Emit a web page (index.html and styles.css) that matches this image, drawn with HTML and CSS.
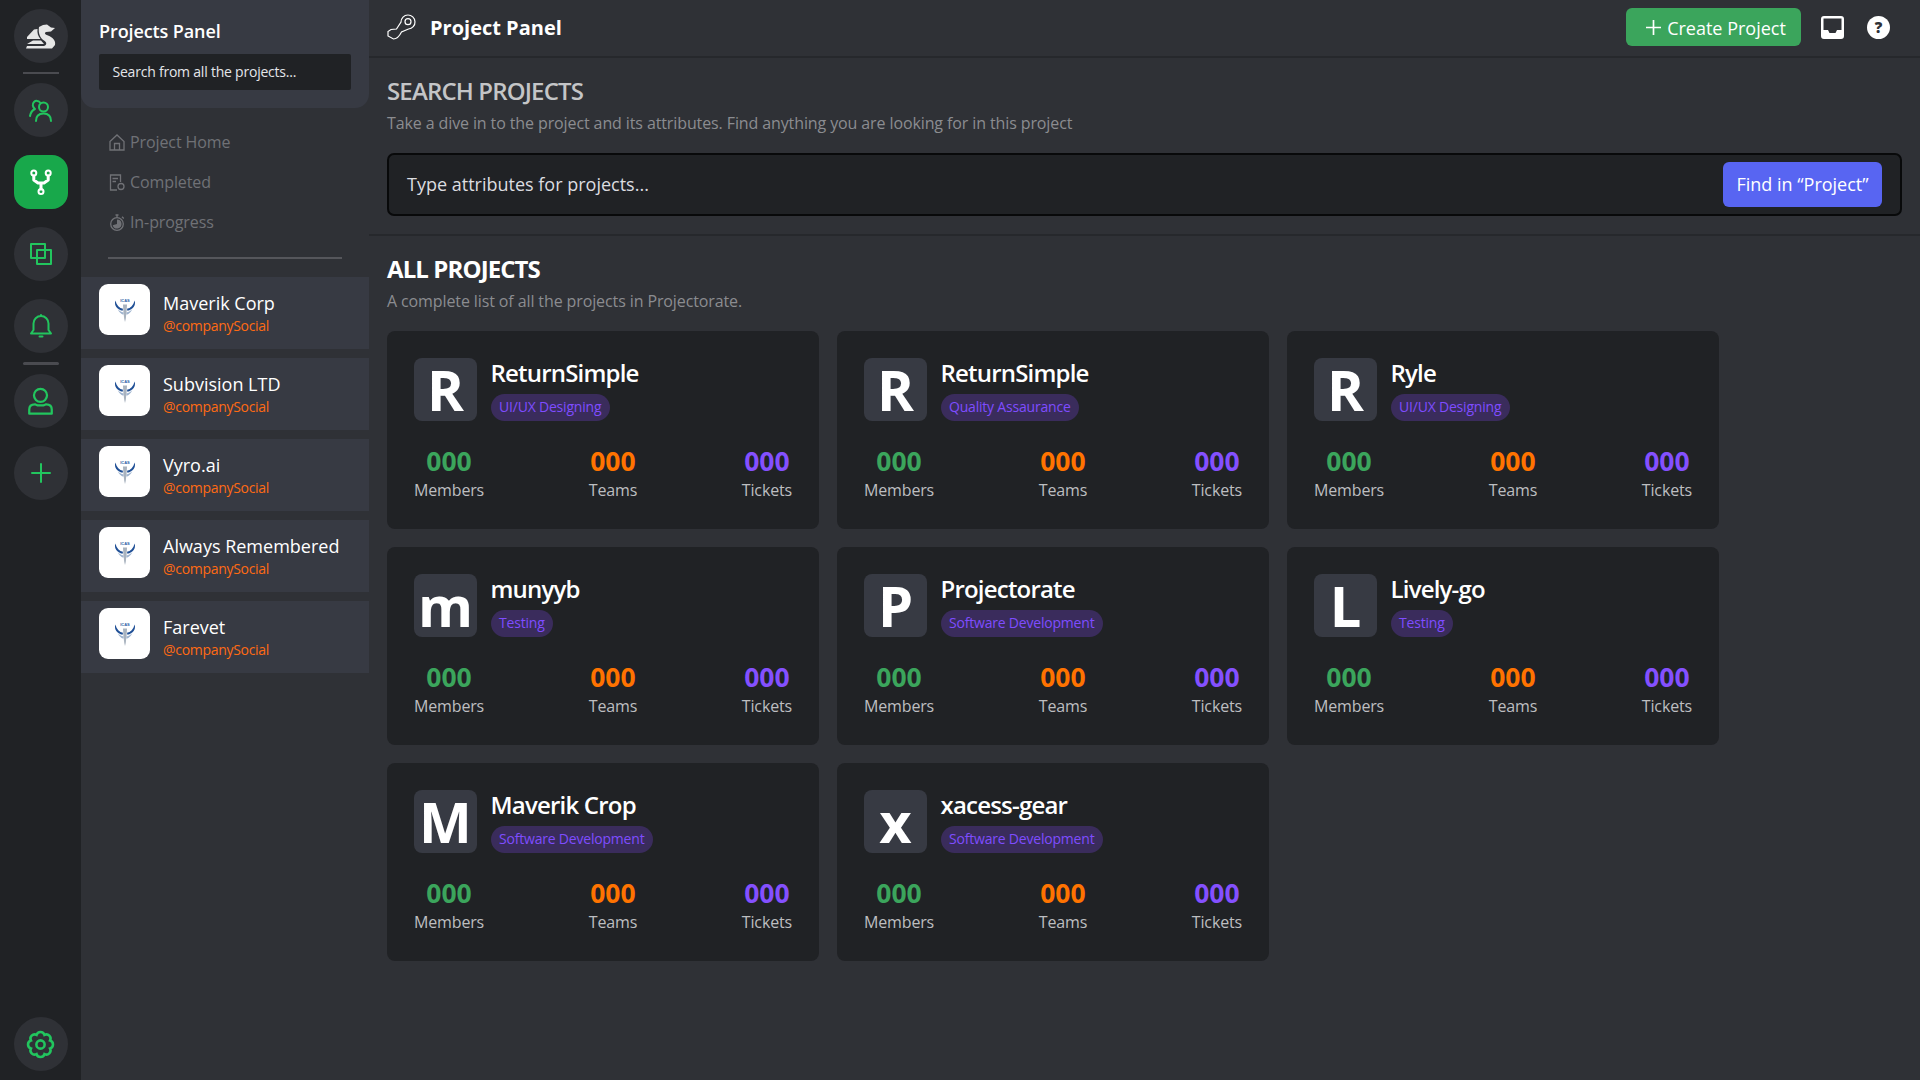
FILE: index.html
```html
<!DOCTYPE html>
<html lang="en">
<head>
<meta charset="utf-8">
<title>Project Panel</title>
<link rel="stylesheet" href="styles.css">
</head>
<body>
<div class="app">
  <nav class="rail">
    <a class="rail-btn">
      <svg class="logo" viewBox="0 0 30 25"><path fill="#e6e6e6" d="M13 3L17 1L21 .5L25 3.500L29 4L25 7.500L20 8C18 9 19 10.500 22 11.500C27 13.500 30 17 29 21L26 24.500L0 24.500L1 22L18 22C21 21 21 18.500 18 16.500C14 14 12 9 13 3Z"/><path fill="#e6e6e6" d="M1 13L8 5.500L11.500 5C11 9 12 12 14.500 15L1 15ZM1 20L7 16.500L15 16.500L18 20Z"/></svg>
    </a>
    <span class="rail-sep"></span>
    <a class="rail-btn">
      <svg class="ico" viewBox="0 0 24 24"><circle cx="14.500" cy="9" r="4.500"/><path d="M7 23C7 18 10 15.500 14.500 15.500S22 18 22 23"/><path d="M11 4.500A4 4 0 0 0 5 4C3 6 3.500 9 6 11C3 12.500 1.500 15 1 18"/></svg>
    </a>
    <a class="rail-btn active">
      <svg class="ico" viewBox="0 0 24 24"><circle cx="4.800" cy="3" r="2.500"/><circle cx="19.200" cy="3" r="2.500"/><circle cx="12" cy="21.500" r="2.500"/><path d="M4.800 6V10L9 13H15L19.200 10V6M12 13V19" stroke-width="3"/></svg>
    </a>
    <a class="rail-btn">
      <svg class="ico" viewBox="0 0 24 24"><rect x="2" y="2" width="14" height="14"/><rect x="8" y="8" width="14" height="14"/></svg>
    </a>
    <a class="rail-btn">
      <svg class="ico" viewBox="0 0 24 24"><path d="M2 19.500H22L19.500 16V9.500A7.500 7.500 0 0 0 4.500 9.500V16ZM12 2V1"/><path d="M10.500 22.500H13.500"/></svg>
    </a>
    <span class="rail-sep thick"></span>
    <a class="rail-btn">
      <svg class="ico big" viewBox="0 0 24 24"><circle cx="12" cy="6.500" r="5.800"/><path d="M2 22.800V19C2 16 4 14.500 7 14.500L9.500 15.500H14.500L17 14.500C20 14.500 22 16 22 19V22.800Z"/></svg>
    </a>
    <a class="rail-btn">
      <svg class="ico" viewBox="0 0 24 24"><path d="M12 3V21M3 12H21"/></svg>
    </a>
    <a class="rail-btn settings">
      <svg class="gear" viewBox="0 0 24 24"><path d="M19.390 8.940A3.200 3.200 0 0 1 19.390 15.060A3.200 3.200 0 0 1 15.060 19.390A3.200 3.200 0 0 1 8.940 19.390A3.200 3.200 0 0 1 4.610 15.060A3.200 3.200 0 0 1 4.610 8.940A3.200 3.200 0 0 1 8.940 4.610A3.200 3.200 0 0 1 15.060 4.610A3.200 3.200 0 0 1 19.390 8.940Z"/><circle cx="12" cy="12" r="3.200"/></svg>
    </a>
  </nav>

  <aside class="sidebar">
    <div class="side-head">
      <h2 class="side-title">Projects Panel</h2>
      <div class="side-search">Search from all the projects...</div>
    </div>
    <ul class="side-menu">
      <li class="side-link"><svg class="menu-ico" viewBox="0 0 16 17"><path d="M1 7.500L8 1L15 7.500V16H1ZM5.500 16V9.500H10.500V16"/></svg>Project Home</li>
      <li class="side-link"><svg class="menu-ico" viewBox="0 0 16 17"><path d="M8 16H1.500V1H11.500V8M3.500 4.500H9M3.500 7.500H7"/><circle cx="12" cy="12.500" r="3"/></svg>Completed</li>
      <li class="side-link"><svg class="menu-ico" viewBox="0 0 16 17"><circle cx="8" cy="10" r="6.300"/><path d="M8 1V3.500M6.500 1H9.500M13 2.800L14.800 4.500"/><path class="menu-fill" d="M8 10V5.500A4.500 4.500 0 1 1 3.700 11.200Z"/></svg>In-progress</li>
    </ul>
    <hr class="side-rule">
    <ul class="company-list">
      <li class="company"><span class="company-logo"><svg class="crest" viewBox="0 0 30 32"><text x="15" y="6" class="crest-text">ICAS</text><path d="M3 4C1 10 5 15 12 17L12.500 14.500C8 13.500 4.500 10 3 4Z" fill="#1f4f96"/><path d="M27 4C29 10 25 15 18 17L17.500 14.500C22 13.500 25.500 10 27 4Z" fill="#1f4f96"/><path d="M6 15C9 18 12 19 13.500 19L13 22C10 21 7.500 18.500 6 15Z" fill="#9fb4cf"/><path d="M24 15C21 18 18 19 16.500 19L17 22C20 21 22.500 18.500 24 15Z" fill="#9fb4cf"/><path d="M12.500 9H17.500L17 18L16 27L15 31L14 27L13 18Z" fill="#a9b3bf"/></svg></span><span class="company-text"><b class="company-name">Maverik Corp</b><i class="company-social">@companySocial</i></span></li>
      <li class="company"><span class="company-logo"><svg class="crest" viewBox="0 0 30 32"><text x="15" y="6" class="crest-text">ICAS</text><path d="M3 4C1 10 5 15 12 17L12.500 14.500C8 13.500 4.500 10 3 4Z" fill="#1f4f96"/><path d="M27 4C29 10 25 15 18 17L17.500 14.500C22 13.500 25.500 10 27 4Z" fill="#1f4f96"/><path d="M6 15C9 18 12 19 13.500 19L13 22C10 21 7.500 18.500 6 15Z" fill="#9fb4cf"/><path d="M24 15C21 18 18 19 16.500 19L17 22C20 21 22.500 18.500 24 15Z" fill="#9fb4cf"/><path d="M12.500 9H17.500L17 18L16 27L15 31L14 27L13 18Z" fill="#a9b3bf"/></svg></span><span class="company-text"><b class="company-name">Subvision LTD</b><i class="company-social">@companySocial</i></span></li>
      <li class="company"><span class="company-logo"><svg class="crest" viewBox="0 0 30 32"><text x="15" y="6" class="crest-text">ICAS</text><path d="M3 4C1 10 5 15 12 17L12.500 14.500C8 13.500 4.500 10 3 4Z" fill="#1f4f96"/><path d="M27 4C29 10 25 15 18 17L17.500 14.500C22 13.500 25.500 10 27 4Z" fill="#1f4f96"/><path d="M6 15C9 18 12 19 13.500 19L13 22C10 21 7.500 18.500 6 15Z" fill="#9fb4cf"/><path d="M24 15C21 18 18 19 16.500 19L17 22C20 21 22.500 18.500 24 15Z" fill="#9fb4cf"/><path d="M12.500 9H17.500L17 18L16 27L15 31L14 27L13 18Z" fill="#a9b3bf"/></svg></span><span class="company-text"><b class="company-name">Vyro.ai</b><i class="company-social">@companySocial</i></span></li>
      <li class="company"><span class="company-logo"><svg class="crest" viewBox="0 0 30 32"><text x="15" y="6" class="crest-text">ICAS</text><path d="M3 4C1 10 5 15 12 17L12.500 14.500C8 13.500 4.500 10 3 4Z" fill="#1f4f96"/><path d="M27 4C29 10 25 15 18 17L17.500 14.500C22 13.500 25.500 10 27 4Z" fill="#1f4f96"/><path d="M6 15C9 18 12 19 13.500 19L13 22C10 21 7.500 18.500 6 15Z" fill="#9fb4cf"/><path d="M24 15C21 18 18 19 16.500 19L17 22C20 21 22.500 18.500 24 15Z" fill="#9fb4cf"/><path d="M12.500 9H17.500L17 18L16 27L15 31L14 27L13 18Z" fill="#a9b3bf"/></svg></span><span class="company-text"><b class="company-name">Always Remembered</b><i class="company-social">@companySocial</i></span></li>
      <li class="company"><span class="company-logo"><svg class="crest" viewBox="0 0 30 32"><text x="15" y="6" class="crest-text">ICAS</text><path d="M3 4C1 10 5 15 12 17L12.500 14.500C8 13.500 4.500 10 3 4Z" fill="#1f4f96"/><path d="M27 4C29 10 25 15 18 17L17.500 14.500C22 13.500 25.500 10 27 4Z" fill="#1f4f96"/><path d="M6 15C9 18 12 19 13.500 19L13 22C10 21 7.500 18.500 6 15Z" fill="#9fb4cf"/><path d="M24 15C21 18 18 19 16.500 19L17 22C20 21 22.500 18.500 24 15Z" fill="#9fb4cf"/><path d="M12.500 9H17.500L17 18L16 27L15 31L14 27L13 18Z" fill="#a9b3bf"/></svg></span><span class="company-text"><b class="company-name">Farevet</b><i class="company-social">@companySocial</i></span></li>
    </ul>
  </aside>

  <main class="main">
    <header class="topbar">
      <svg class="top-ico" viewBox="0 0 29 26"><path d="M14 8A7 7 0 1 1 21.500 15L14.500 18C12.500 22 9.500 25 6.500 25L1 22V17.500L4 15.500L9.500 15Z"/><circle cx="21" cy="7.700" r="3"/></svg>
      <h1 class="top-title">Project Panel</h1>
      <button class="btn-create"><svg class="plus" viewBox="0 0 16 16"><path d="M8 0V16M0 8H16"/></svg><span class="btn-label">Create Project</span></button>
      <svg class="inbox" viewBox="0 0 23 23"><path fill="#fff" fill-rule="evenodd" d="M3 0H20A3 3 0 0 1 23 3V20A3 3 0 0 1 20 23H3A3 3 0 0 1 0 20V3A3 3 0 0 1 3 0ZM2.500 2.500V14H7L8.500 17H14.500L16 14H20.500V2.500Z"/></svg>
      <span class="help">?</span>
    </header>

    <section class="search-section">
      <h2 class="sec-title muted">SEARCH PROJECTS</h2>
      <p class="sec-sub">Take a dive in to the project and its attributes. Find anything you are looking for in this project</p>
      <div class="find-box">
        <span class="find-text">Type attributes for projects...</span>
        <button class="btn-find">Find in “Project”</button>
      </div>
    </section>

    <section class="all-section">
      <h2 class="sec-title">ALL PROJECTS</h2>
      <p class="sec-sub">A complete list of all the projects in Projectorate.</p>
      <div class="grid">
        <article class="card">
          <div class="card-head"><span class="letter">R</span><div><h3 class="card-name">ReturnSimple</h3><span class="tag">UI/UX Designing</span></div></div>
          <div class="stats"><div class="stat"><b class="num green">000</b><span class="lbl">Members</span></div><div class="stat"><b class="num orange">000</b><span class="lbl">Teams</span></div><div class="stat"><b class="num purple">000</b><span class="lbl">Tickets</span></div></div>
        </article>
        <article class="card">
          <div class="card-head"><span class="letter">R</span><div><h3 class="card-name">ReturnSimple</h3><span class="tag">Quality Assaurance</span></div></div>
          <div class="stats"><div class="stat"><b class="num green">000</b><span class="lbl">Members</span></div><div class="stat"><b class="num orange">000</b><span class="lbl">Teams</span></div><div class="stat"><b class="num purple">000</b><span class="lbl">Tickets</span></div></div>
        </article>
        <article class="card">
          <div class="card-head"><span class="letter">R</span><div><h3 class="card-name">Ryle</h3><span class="tag">UI/UX Designing</span></div></div>
          <div class="stats"><div class="stat"><b class="num green">000</b><span class="lbl">Members</span></div><div class="stat"><b class="num orange">000</b><span class="lbl">Teams</span></div><div class="stat"><b class="num purple">000</b><span class="lbl">Tickets</span></div></div>
        </article>
        <article class="card">
          <div class="card-head"><span class="letter">m</span><div><h3 class="card-name">munyyb</h3><span class="tag">Testing</span></div></div>
          <div class="stats"><div class="stat"><b class="num green">000</b><span class="lbl">Members</span></div><div class="stat"><b class="num orange">000</b><span class="lbl">Teams</span></div><div class="stat"><b class="num purple">000</b><span class="lbl">Tickets</span></div></div>
        </article>
        <article class="card">
          <div class="card-head"><span class="letter">P</span><div><h3 class="card-name">Projectorate</h3><span class="tag">Software Development</span></div></div>
          <div class="stats"><div class="stat"><b class="num green">000</b><span class="lbl">Members</span></div><div class="stat"><b class="num orange">000</b><span class="lbl">Teams</span></div><div class="stat"><b class="num purple">000</b><span class="lbl">Tickets</span></div></div>
        </article>
        <article class="card">
          <div class="card-head"><span class="letter">L</span><div><h3 class="card-name">Lively-go</h3><span class="tag">Testing</span></div></div>
          <div class="stats"><div class="stat"><b class="num green">000</b><span class="lbl">Members</span></div><div class="stat"><b class="num orange">000</b><span class="lbl">Teams</span></div><div class="stat"><b class="num purple">000</b><span class="lbl">Tickets</span></div></div>
        </article>
        <article class="card">
          <div class="card-head"><span class="letter">M</span><div><h3 class="card-name">Maverik Crop</h3><span class="tag">Software Development</span></div></div>
          <div class="stats"><div class="stat"><b class="num green">000</b><span class="lbl">Members</span></div><div class="stat"><b class="num orange">000</b><span class="lbl">Teams</span></div><div class="stat"><b class="num purple">000</b><span class="lbl">Tickets</span></div></div>
        </article>
        <article class="card">
          <div class="card-head"><span class="letter">x</span><div><h3 class="card-name">xacess-gear</h3><span class="tag">Software Development</span></div></div>
          <div class="stats"><div class="stat"><b class="num green">000</b><span class="lbl">Members</span></div><div class="stat"><b class="num orange">000</b><span class="lbl">Teams</span></div><div class="stat"><b class="num purple">000</b><span class="lbl">Tickets</span></div></div>
        </article>
      </div>
    </section>
  </main>
</div>
</body>
</html>
```
FILE: styles.css
```css
* { box-sizing: border-box; }
html, body { margin: 0; height: 100%; }
body { background: #2f3136; color: #fff; font-family: "Open Sans", "Noto Sans", sans-serif; overflow: hidden; }
h1, h2, h3, p, ul { margin: 0; padding: 0; }
ul { list-style: none; }
i, b { font-style: normal; }
.crest-text { font: 700 5px "Liberation Sans", sans-serif; fill: #2a5aa5; text-anchor: middle; }

.app { display: flex; height: 1080px; }

.rail { width: 81px; flex: none; background: #202225; display: flex; flex-direction: column; align-items: center; padding: 9px 0; }
.rail-btn { width: 54px; height: 54px; flex: none; border-radius: 50%; background: #2f3136; display: flex; align-items: center; justify-content: center; margin-bottom: 18px; }
.rail-btn:first-child { margin-bottom: 9px; }
.rail-btn.active { background: #18a84b; border-radius: 16px; }
.rail-btn.active .ico { stroke: #fff; }
.rail-btn.settings { margin: auto 0 0; }
.rail-sep { width: 36px; height: 2px; background: #4a4b50; margin: 0 0 9px; flex: none; }
.rail-sep.thick { height: 3px; border-radius: 2px; margin: -9px 0 9px; }
.logo { width: 30px; height: 25px; }
.ico { width: 24px; height: 24px; fill: none; stroke: #22c55e; stroke-width: 2; stroke-linecap: round; stroke-linejoin: round; overflow: visible; }
.ico.big { width: 27px; height: 27px; }
.gear { width: 31px; height: 31px; fill: none; stroke: #22c55e; stroke-width: 2; }

.sidebar { width: 288px; flex: none; background: #2f3136; }
.side-head { height: 108px; background: #373a43; border-radius: 0 0 14px 14px; padding: 18px 18px 0; }
.side-title { font-size: 18px; font-weight: 600; line-height: 27px; margin-bottom: 9px; letter-spacing: -.1px; }
.side-search { height: 36px; background: #202225; border-radius: 2px; padding: 0 13.500px; font-size: 14px; line-height: 36px; color: #e4e6ea; letter-spacing: -.22px; }
.side-menu { margin-top: 14px; padding-left: 28px; }
.side-link { height: 40px; display: flex; align-items: center; gap: 5px; font-size: 16px; color: #707176; letter-spacing: -.1px; }
.menu-ico { width: 16px; height: 17px; fill: none; stroke: #707176; stroke-width: 1.300; flex: none; }
.menu-fill { fill: #707176; stroke: none; }
.side-rule { width: 234px; height: 2px; border: 0; background: #55565b; margin: 15px 0 18px 27px; }
.company-list { display: flex; flex-direction: column; gap: 9px; }
.company { height: 72px; background: #373a43; padding: 7px 18px; display: flex; align-items: center; gap: 13px; }
.company-logo { width: 51px; height: 51px; flex: none; align-self: flex-start; background: #fff; border-radius: 9px; display: flex; align-items: center; justify-content: center; }
.crest { width: 24px; height: 26px; }
.company-text { display: flex; flex-direction: column; }
.company-name { font-size: 18px; font-weight: 400; line-height: 25px; color: #fff; }
.company-social { font-size: 14px; line-height: 20px; color: #ff6a13; letter-spacing: -.3px; }

.main { flex: 1; min-width: 0; }
.topbar { height: 58px; border-bottom: 2px solid #26282c; display: flex; align-items: center; padding: 0 30px 2px 18px; }
.top-ico { width: 29px; height: 26px; fill: none; stroke: #fff; stroke-width: 1.200; flex: none; margin-right: 14px; }
.top-title { font-size: 20px; font-weight: 700; flex: 1; }
.btn-create { width: 175px; height: 38px; border: 0; border-radius: 6px; background: #3ba55c; color: #fff; font: 400 18px "Open Sans", sans-serif; display: flex; align-items: center; justify-content: center; gap: 6px; padding: 0 0 0 5px; }
.btn-label { position: relative; top: 1px; }
.plus { width: 15px; height: 15px; fill: none; stroke: #fff; stroke-width: 1.800; }
.inbox { width: 23px; height: 23px; margin-left: 20px; flex: none; }
.help { width: 23px; height: 23px; margin-left: 23px; border-radius: 50%; background: #fff; color: #2f3136; font-size: 15px; font-weight: 800; text-align: center; line-height: 23px; flex: none; }

.search-section { padding: 18px 18px 18px; border-bottom: 2px solid #26282c; }
.sec-title { font-size: 24px; font-weight: 700; line-height: 30px; color: #fff; letter-spacing: -.9px; }
.sec-title.muted { color: #c4c5c7; font-weight: 600; letter-spacing: -.85px; }
.sec-sub { font-size: 16px; line-height: 24px; color: #8b8c90; margin-top: 5px; letter-spacing: -.11px; }
.find-box { height: 63px; margin-top: 18px; background: #202225; border: 2px solid #08090a; border-radius: 7px; display: flex; align-items: center; justify-content: space-between; padding: 0 18px; }
.find-text { font-size: 18px; color: #dcdde0; margin-bottom: 2px; }
.btn-find { width: 159px; height: 45px; border: 0; border-radius: 6px; background: #5865f2; color: #fff; font: 400 18px "Open Sans", sans-serif; padding: 0 0 2px; }

.all-section { padding: 18px 18px 0; }
.grid { display: grid; grid-template-columns: repeat(3, 432px); gap: 18px; margin-top: 18px; }
.card { height: 198px; background: #202225; border-radius: 8px; padding: 27px; }
.card-head { display: flex; gap: 13.500px; height: 63px; }
.letter { width: 63px; height: 63px; flex: none; background: #373a43; border-radius: 8px; font-size: 56px; font-weight: 700; line-height: 63px; text-align: center; }
.card-name { font-size: 24px; font-weight: 600; line-height: 30px; margin-bottom: 6px; letter-spacing: -.8px; }
.tag { display: block; width: fit-content; height: 27px; line-height: 26px; padding: 0 8.500px; border-radius: 14px; background: #3a2c5c; color: #7f4cff; font-size: 14px; letter-spacing: -.2px; }
.stats { display: flex; justify-content: space-between; margin-top: 22px; }
.stat { display: flex; flex-direction: column; align-items: center; }
.num { font-size: 26.500px; font-weight: 700; line-height: 36px; }
.green { color: #3ba55c; }
.orange { color: #ff7300; }
.purple { color: #8450ff; }
.lbl { font-size: 16px; line-height: 22px; color: #bdbec0; letter-spacing: -.15px; }
```
